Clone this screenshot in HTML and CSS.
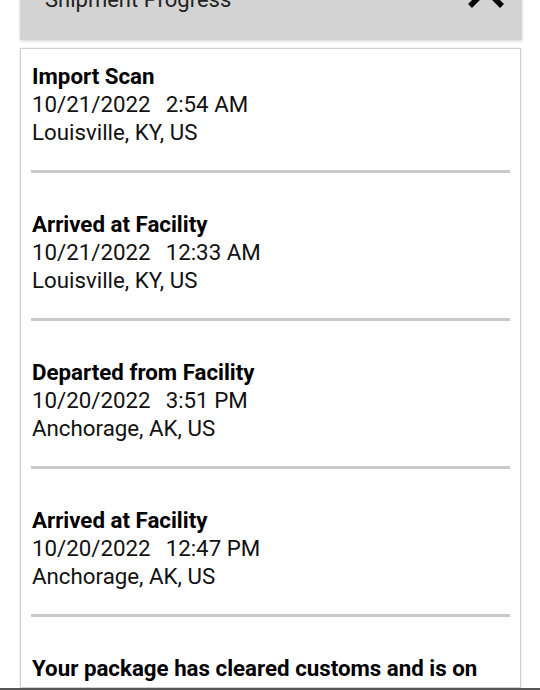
FILE: index.html
```html
<!DOCTYPE html>
<html lang="en">
<head>
<meta charset="utf-8">
<title>Shipment Progress</title>
<link rel="stylesheet" href="styles.css">
</head>
<body>
<div class="page">
  <header class="header">
    <span class="header-title">Shipment Progress</span>
    <svg class="close" width="38" height="38" viewBox="0 0 38 38" aria-hidden="true">
      <path d="M3 3 L35 35 M35 3 L3 35" stroke="#000" stroke-width="5.5" fill="none"/>
    </svg>
  </header>
  <main class="card">
    <ul class="events">
      <li class="event">
        <div class="event-title">Import Scan</div>
        <div class="event-line">10/21/2022<span class="time">2:54 AM</span></div>
        <div class="event-line">Louisville, KY, US</div>
      </li>
      <li class="event">
        <div class="event-title">Arrived at Facility</div>
        <div class="event-line">10/21/2022<span class="time">12:33 AM</span></div>
        <div class="event-line">Louisville, KY, US</div>
      </li>
      <li class="event">
        <div class="event-title">Departed from Facility</div>
        <div class="event-line">10/20/2022<span class="time">3:51 PM</span></div>
        <div class="event-line">Anchorage, AK, US</div>
      </li>
      <li class="event">
        <div class="event-title">Arrived at Facility</div>
        <div class="event-line">10/20/2022<span class="time">12:47 PM</span></div>
        <div class="event-line">Anchorage, AK, US</div>
      </li>
      <li class="event">
        <div class="event-title">Your package has cleared customs and is on the way</div>
        <div class="event-line">10/20/2022<span class="time">11:02 AM</span></div>
        <div class="event-line">Anchorage, AK, US</div>
      </li>
    </ul>
  </main>
  <div class="bottom-bar"></div>
</div>
</body>
</html>
```
FILE: styles.css
```css
html, body {
  margin: 0;
  padding: 0;
  background: #ffffff;
}
body {
  font-family: Roboto, "Noto Sans", "Liberation Sans", sans-serif;
  color: #111;
  overflow: hidden;
}
.page {
  height: 690px;
  display: flex;
  flex-direction: column;
  overflow: hidden;
}
.header {
  flex: none;
  box-sizing: border-box;
  height: 80px;
  margin: -40px 18px 0 20px;
  padding: 0 17px 0 25px;
  background: #d3d3d3;
  box-shadow: 0 1px 3px rgba(0, 0, 0, 0.18);
  display: flex;
  align-items: center;
  justify-content: space-between;
}
.header-title {
  font-size: 22px;
  line-height: 26px;
  color: #222;
}
.close {
  align-self: flex-start;
  margin-top: 11px;
}
.card {
  flex: 1;
  min-height: 0;
  overflow: hidden;
  margin: 8px 19px 0 20px;
  border: 1px solid #cfcfcf;
  box-shadow: 0 0 2px rgba(0, 0, 0, 0.12);
  background: #fff;
}
.events {
  list-style: none;
  margin: 0;
  padding: 13px 10px 0 10px;
}
.event {
  padding: 0 0 24px 1px;
  border-bottom: 3px solid #c9c9c5;
  margin-bottom: 37px;
}
.event-title {
  font-size: 22.3px;
  line-height: 28px;
  font-weight: 700;
  color: #000;
}
.event-line {
  font-size: 22.3px;
  line-height: 28px;
  color: #111;
}
.time {
  margin-left: 15px;
}
.bottom-bar {
  flex: none;
  height: 2px;
  background: #555;
}
```
